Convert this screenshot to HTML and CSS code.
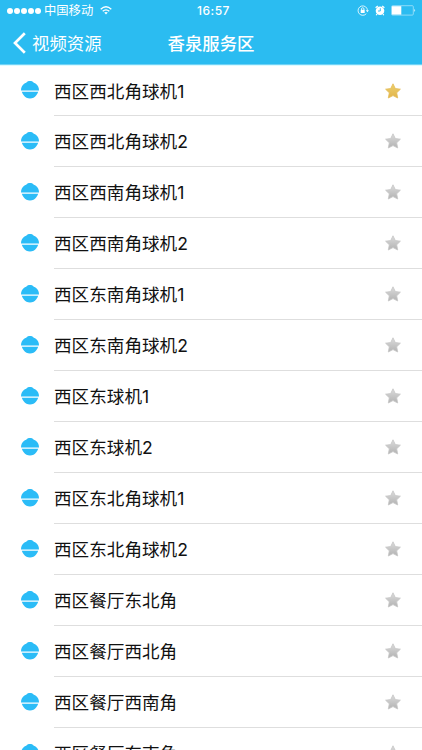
FILE: index.html
```
<!DOCTYPE html>
<html lang="zh-CN">
<head>
<meta charset="UTF-8">
<meta name="viewport" content="width=device-width, initial-scale=1.0">
<title>香泉服务区</title>
<link rel="stylesheet" href="styles.css">
</head>
<body>
<svg class="defs" aria-hidden="true">
    <defs>
        <linearGradient id="gold" x1="0" y1="0" x2="0" y2="1">
            <stop offset="0" stop-color="#ecd06e"/>
            <stop offset="1" stop-color="#e2b44a"/>
        </linearGradient>
        <linearGradient id="grey" x1="0" y1="0" x2="0" y2="1">
            <stop offset="0" stop-color="#dcdcdc"/>
            <stop offset="1" stop-color="#b2b2b2"/>
        </linearGradient>
        <symbol id="camera" viewBox="0 0 20 20">
            <path d="M1 10.500C1 7.500 2.200 5.200 4.200 3.800C5.200 3.100 6 3.100 6.700 2.300C7.700 .7 12.300 .7 13.300 2.300C14 3.100 14.800 3.100 15.800 3.800C17.800 5.200 19 7.500 19 10.500Z"/>
            <path d="M1.800 11.700H18.200C17.700 13.300 17 14.300 16.300 15.200C14.700 17.400 12.600 18.500 10 18.500S5.300 17.400 3.700 15.200C3 14.300 2.300 13.300 1.800 11.700Z"/>
        </symbol>
        <symbol id="star" viewBox="0 0 16 16">
            <path stroke-width=".8" stroke-linejoin="round" d="M8 .8L10.300 5.500L15.400 6.200L11.700 9.800L12.700 15L8 12.600L3.300 15L4.300 9.800L.6 6.200L5.700 5.500Z"/>
        </symbol>
    </defs>
</svg>

<div class="header">
    <div class="status-bar">
        <div class="signal"><i></i><i></i><i></i><i></i><i></i></div>
        <span class="carrier">中国移动</span>
        <svg class="wifi" viewBox="0 0 12 9">
            <path d="M.7 3.200Q6 -1.600 11.300 3.200M2.700 5.300Q6 2.400 9.300 5.300" fill="none" stroke="#fff" stroke-width="1.300"/>
            <path d="M4.200 6.600Q6 5.200 7.800 6.600L6 8.600Z" fill="#fff"/>
        </svg>
        <span class="time">16:57</span>
        <div class="status-icons">
            <svg class="lock" viewBox="0 0 12 11">
                <path d="M9.800 3.200A4.700 4.700 0 1 0 9.300 8.700M9.800 3.200Q10.400 4.200 10.400 5.500" fill="none" stroke="#fff" stroke-width=".8"/>
                <path d="M8.900 5.200H11.900L10.400 7.200Z" fill="#fff"/>
                <path d="M4.500 5V3.900Q4.500 2.700 5.700 2.700T6.900 3.900V5" fill="none" stroke="#fff" stroke-width=".8"/>
                <rect x="3.700" y="4.800" width="4" height="3.200" fill="#fff"/>
            </svg>
            <svg class="alarm" viewBox="0 0 10 11">
                <circle cx="5" cy="5.800" r="4.300" fill="#fff"/>
                <path d="M.6 2.800L2.800 1M9.400 2.800L7.200 1M2 9L1.200 10.300M8 9L8.800 10.300" stroke="#fff" stroke-width="1.200"/>
                <path d="M5.300 3.200V6H3" fill="none" stroke="#2bbcf1" stroke-width=".9"/>
            </svg>
            <svg class="battery" viewBox="0 0 25 11">
                <rect x=".5" y=".7" width="21.800" height="9.400" rx="1" fill="none" stroke="#a5e2fa" stroke-width=".8"/>
                <rect x="1" y="1.200" width="9.300" height="8.400" fill="#fff"/>
                <path d="M23.400 3.800Q25 5.400 23.400 7Z" fill="#fff"/>
            </svg>
        </div>
    </div>
    <div class="nav-bar">
        <a class="back">
            <svg viewBox="0 0 13 22"><path d="M11.800 1.300L2 11L11.800 20.700" fill="none" stroke="#fff" stroke-width="2.700"/></svg>
            <span>视频资源</span>
        </a>
        <h1>香泉服务区</h1>
    </div>
</div>

<ul class="camera-list" id="cameraList"></ul>

<script>
const cameras = [
    { name: '西区西北角球机1', starred: true },
    { name: '西区西北角球机2' },
    { name: '西区西南角球机1' },
    { name: '西区西南角球机2' },
    { name: '西区东南角球机1' },
    { name: '西区东南角球机2' },
    { name: '西区东球机1' },
    { name: '西区东球机2' },
    { name: '西区东北角球机1' },
    { name: '西区东北角球机2' },
    { name: '西区餐厅东北角' },
    { name: '西区餐厅西北角' },
    { name: '西区餐厅西南角' },
    { name: '西区餐厅东南角' }
];

document.getElementById('cameraList').innerHTML = cameras.map(camera => `
    <li class="camera">
        <svg class="camera-icon"><use href="#camera"/></svg>
        <div class="camera-row">
            <span>${camera.name}</span>
            <svg class="star ${camera.starred ? 'starred' : ''}"><use href="#star"/></svg>
        </div>
    </li>
`).join('');
</script>
</body>
</html>
```

FILE: styles.css
```
body {
    margin: 0;
    height: 750px;
    overflow: hidden;
    background-color: #fff;
    font-family: Inter, 'Noto Sans CJK SC', sans-serif;
    color: #111;
}

.defs {
    display: block;
    width: 0;
    height: 0;
}

.header {
    box-sizing: border-box;
    height: 65px;
    background-color: #2bbcf1;
    border-bottom: 1px solid #6fd2f6;
    color: #fff;
}

.status-bar {
    display: grid;
    grid-template-columns: 34px 53px 14px 1fr 76px;
    align-items: center;
    height: 21px;
    padding: 0 6px 0 7px;
    line-height: 20px;
}

.signal {
    display: flex;
    gap: 1px;
}

.signal i {
    width: 6px;
    height: 6px;
    border-radius: 50%;
    background-color: #fff;
}

.carrier {
    padding-left: 3px;
    font-size: 12.3px;
    white-space: nowrap;
}

.wifi {
    width: 12px;
    height: 9px;
    margin-left: 6px;
}

.time {
    padding-left: 89px;
    font-size: 12px;
    font-weight: 500;
    letter-spacing: 0.5px;
}

.status-icons {
    display: flex;
    align-items: center;
    justify-content: flex-end;
}

.lock {
    width: 12px;
    height: 11px;
    margin-right: 6px;
}

.alarm {
    width: 10px;
    height: 11px;
    margin-right: 6px;
}

.battery {
    width: 25px;
    height: 11px;
}

.nav-bar {
    display: grid;
    grid-template-columns: 1fr auto 1fr;
    align-items: center;
    height: 43px;
}

.nav-bar span,
.nav-bar h1 {
    padding-bottom: 1px;
}

.back {
    display: flex;
    align-items: center;
    padding-left: 13px;
    font-size: 17.4px;
}

.back svg {
    width: 13px;
    height: 22px;
    margin-right: 6px;
}

.nav-bar h1 {
    margin: 0;
    font-size: 17.4px;
    font-weight: 500;
}

.camera-list {
    margin: 0;
    padding: 0;
    border-top: 1px solid #dbfaff;
    list-style: none;
}

.camera {
    display: flex;
    height: 50.97px;
}

.camera:first-child {
    height: 50px;
}

.camera-icon {
    width: 20px;
    height: 20px;
    margin: 15px 14.5px 0 19.5px;
    fill: #2bbcf7;
}

.camera:first-child .camera-icon {
    margin-top: 14px;
}

.camera-row {
    display: flex;
    flex: 1;
    align-items: center;
    justify-content: space-between;
    box-sizing: border-box;
    padding: 1px 21px 0 0;
    border-bottom: 1px solid #dedede;
    font-size: 17.6px;
}

.camera-row span {
    padding-bottom: 1px;
}

.star {
    width: 16px;
    height: 16px;
    fill: url(#grey);
    stroke: #c6c6c6;
}

.starred {
    fill: url(#gold);
    stroke: #e4bd58;
}
```
